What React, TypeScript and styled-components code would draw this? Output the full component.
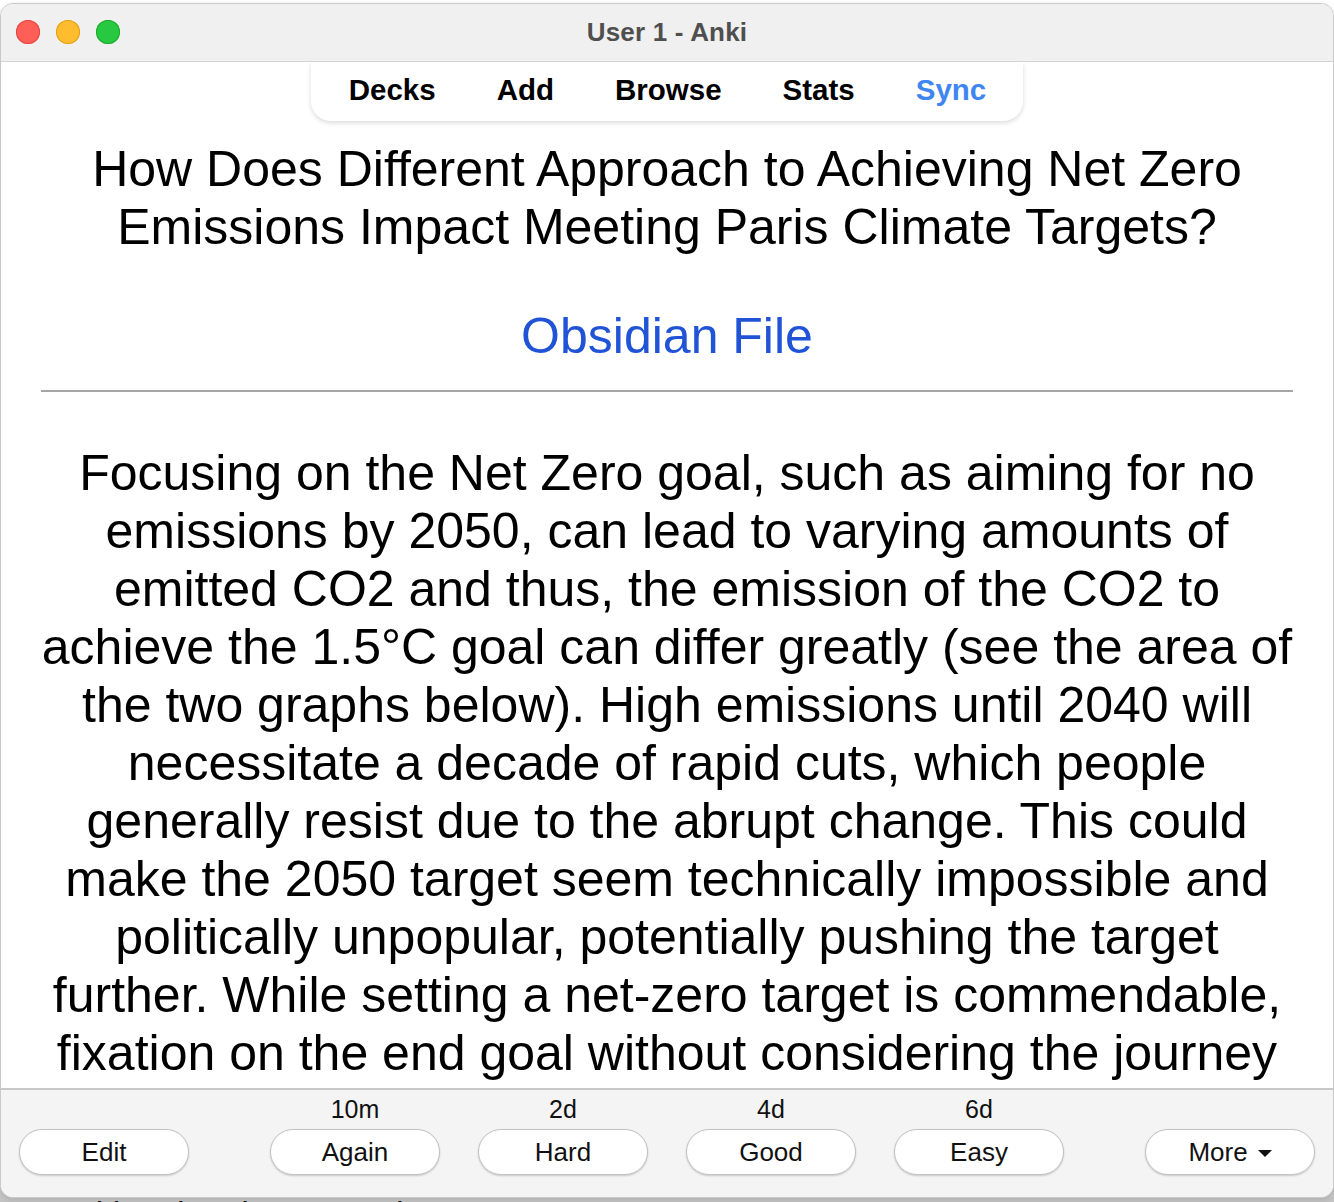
import styled, { createGlobalStyle } from "styled-components";

const GlobalStyle = createGlobalStyle`
  html, body {
    margin: 0;
    padding: 0;
    background: #ffffff;
  }
  body {
    font-family: "Liberation Sans", Arial, sans-serif;
  }
`;

const Page = styled.div`
  position: relative;
  width: 1334px;
  height: 1202px;
  overflow: hidden;
  background: linear-gradient(180deg, #ffffff 0, #ffffff 1180px, #cdcdcd 1180px, #c4c4c4 100%);
`;

const BehindText = styled.div`
  position: absolute;
  left: 10px;
  top: 1194px;
  font-size: 34px;
  color: #111;
  white-space: nowrap;
`;

const Window = styled.div`
  position: relative;
  z-index: 1;
  margin-top: 3px;
  height: 1195px;
  box-sizing: border-box;
  border: 1px solid #c9c9c9;
  border-radius: 13px;
  overflow: hidden;
  display: flex;
  flex-direction: column;
  background: #fff;
  box-shadow: 0 2px 6px rgba(0, 0, 0, 0.12);
`;

const TitleBar = styled.div`
  position: relative;
  height: 57px;
  flex-shrink: 0;
  background: #f0f0f0;
  border-bottom: 1px solid #d4d4d4;
  display: flex;
  align-items: center;
  justify-content: center;
`;

const Lights = styled.div`
  position: absolute;
  left: 15px;
  top: 16px;
  display: flex;
  gap: 16px;
`;

const Light = styled.span<{ $color: string; $edge: string }>`
  width: 24px;
  height: 24px;
  border-radius: 50%;
  background: ${(p) => p.$color};
  box-shadow: inset 0 0 0 1px ${(p) => p.$edge};
`;

const Title = styled.div`
  font-size: 26px;
  font-weight: 700;
  color: #4f4f4f;
  letter-spacing: 0.2px;
`;

const Main = styled.div`
  flex: 1;
  min-height: 0;
  overflow: hidden;
  display: flex;
  flex-direction: column;
  align-items: center;
`;

const Toolbar = styled.nav`
  flex-shrink: 0;
  display: flex;
  align-items: center;
  gap: 61px;
  height: 59px;
  box-sizing: border-box;
  padding: 0 37px 4px 38px;
  background: #fff;
  border-radius: 0 0 20px 20px;
  box-shadow: 0 2px 5px rgba(0, 0, 0, 0.14);
`;

const NavItem = styled.span<{ $active?: boolean }>`
  font-size: 29.5px;
  font-weight: 700;
  color: ${(p) => (p.$active ? "#3f86f0" : "#000")};
`;

const Card = styled.div`
  flex-shrink: 0;
  align-self: stretch;
  padding: 0 40px;
  text-align: center;
  color: #000;
  font-size: 50px;
  line-height: 58px;
`;

const Question = styled.div`
  margin-top: 19px;
`;

const Line = styled.div`
  white-space: nowrap;
`;

const SourceLink = styled.div`
  margin-top: 51px;
  color: #2153d6;
`;

const Rule = styled.div`
  margin-top: 25px;
  height: 2px;
  background: #a6a6a6;
`;

const Answer = styled.div`
  margin-top: 52px;
`;

const BottomBar = styled.div`
  flex-shrink: 0;
  height: 109px;
  box-sizing: border-box;
  background: #f4f4f4;
  border-top: 2px solid #c8c8c8;
  display: flex;
  align-items: flex-end;
  justify-content: space-between;
  padding: 0 18px 22px 18px;
`;

const AnswerGroup = styled.div`
  display: flex;
  gap: 38px;
`;

const AnswerCol = styled.div`
  display: flex;
  flex-direction: column;
  align-items: center;
  gap: 6px;
`;

const Interval = styled.div`
  font-size: 25px;
  line-height: 28px;
  color: #111;
`;

const PillButton = styled.button`
  width: 170px;
  height: 46px;
  border-radius: 23px;
  border: 1px solid #c2c2c2;
  background: #fff;
  box-shadow: 0 1px 2px rgba(0, 0, 0, 0.18);
  font-family: "Liberation Sans", Arial, sans-serif;
  font-size: 26px;
  color: #111;
  display: flex;
  align-items: center;
  justify-content: center;
  gap: 10px;
  padding: 0;
`;

const Caret = styled.span`
  width: 0;
  height: 0;
  margin-top: 2px;
  border-left: 7px solid transparent;
  border-right: 7px solid transparent;
  border-top: 7px solid #111;
`;

const question = [
  "How Does Different Approach to Achieving Net Zero",
  "Emissions Impact Meeting Paris Climate Targets?",
];

const answer = [
  "Focusing on the Net Zero goal, such as aiming for no",
  "emissions by 2050, can lead to varying amounts of",
  "emitted CO2 and thus, the emission of the CO2 to",
  "achieve the 1.5°C goal can differ greatly (see the area of",
  "the two graphs below). High emissions until 2040 will",
  "necessitate a decade of rapid cuts, which people",
  "generally resist due to the abrupt change. This could",
  "make the 2050 target seem technically impossible and",
  "politically unpopular, potentially pushing the target",
  "further. While setting a net-zero target is commendable,",
  "fixation on the end goal without considering the journey",
];

const ease = [
  { label: "Again", interval: "10m" },
  { label: "Hard", interval: "2d" },
  { label: "Good", interval: "4d" },
  { label: "Easy", interval: "6d" },
];

const App = () => {
  return (
    <Page>
      <GlobalStyle />
      <BehindText>Transitional pathways and summary</BehindText>
      <Window>
        <TitleBar>
          <Lights>
            <Light $color="#ff5f57" $edge="#e2463f" />
            <Light $color="#febc2e" $edge="#e1a116" />
            <Light $color="#28c840" $edge="#1aab29" />
          </Lights>
          <Title>User 1 - Anki</Title>
        </TitleBar>
        <Main>
          <Toolbar>
            <NavItem>Decks</NavItem>
            <NavItem>Add</NavItem>
            <NavItem>Browse</NavItem>
            <NavItem>Stats</NavItem>
            <NavItem $active>Sync</NavItem>
          </Toolbar>
          <Card>
            <Question>
              {question.map((l) => (
                <Line key={l}>{l}</Line>
              ))}
            </Question>
            <SourceLink>Obsidian File</SourceLink>
            <Rule />
            <Answer>
              {answer.map((l) => (
                <Line key={l}>{l}</Line>
              ))}
            </Answer>
          </Card>
        </Main>
        <BottomBar>
          <PillButton>Edit</PillButton>
          <AnswerGroup>
            {ease.map((e) => (
              <AnswerCol key={e.label}>
                <Interval>{e.interval}</Interval>
                <PillButton>{e.label}</PillButton>
              </AnswerCol>
            ))}
          </AnswerGroup>
          <PillButton>
            More
            <Caret />
          </PillButton>
        </BottomBar>
      </Window>
    </Page>
  );
};

export default App;
